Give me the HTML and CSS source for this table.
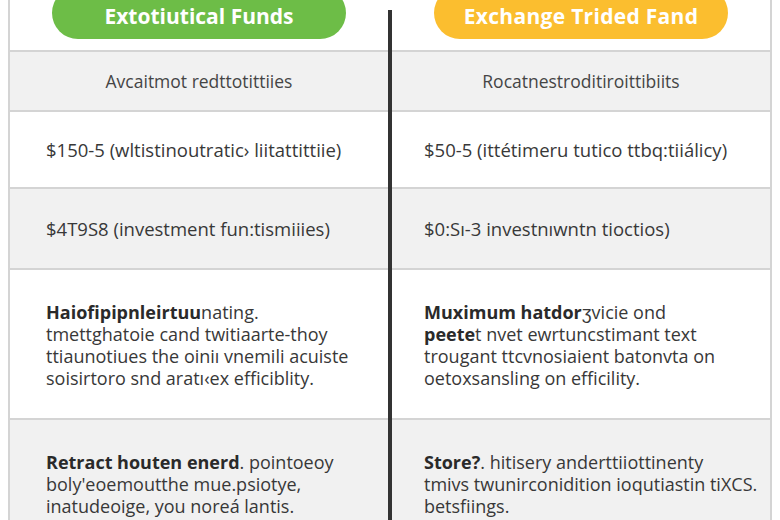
FILE: index.html
```html
<!DOCTYPE html>
<html>
<head>
<meta charset="utf-8">
<link rel="stylesheet" href="styles.css">
</head>
<body>
<div class="compare">
  <div class="col col-left">
    <div class="row head"><div class="pill pill-green">Extotiutical Funds</div></div>
    <div class="row sub gray">Avcaitmot redttotittiies</div>
    <div class="row price">$150-5 (wltistinoutratic› liitattittiie)</div>
    <div class="row price gray tall">$4T9S8 (investment fun:tismiiies)</div>
    <div class="row para"><p><b>Haiofipipnleirtuu</b>nating.<br>tmettghatoie cand twitiaarte-thoy<br>ttiaunotiues the oiniı vnemili acuiste<br>soisirtoro snd aratı‹ex efficiblity.</p></div>
    <div class="row para gray last"><p><b>Retract houten enerd</b>. pointoeoy<br>boly'eoemoutthe mue.psiotye,<br>inatudeoige, you noreá lantis.</p></div>
  </div>
  <div class="divider"></div>
  <div class="col col-right">
    <div class="row head"><div class="pill pill-yellow">Exchange Trided Fand</div></div>
    <div class="row sub gray">Rocatnestroditiroittibiits</div>
    <div class="row price">$50-5 (ittétimeru tutico ttbq:tiiálicy)</div>
    <div class="row price gray tall">$0:Sı-3 investnıwntn tioctios)</div>
    <div class="row para"><p><b>Muximum hatdor</b>ʒvicie ond<br><b>peete</b>t nvet ewrtuncstimant text<br>trougant ttcvnosiaient batonvta on<br>oetoxsansling on efficility.</p></div>
    <div class="row para gray last"><p><b>Store?</b>. hitisery anderttiiottinenty<br>tmivs twunirconidition ioqutiastin tiXCS.<br>betsfiings.</p></div>
  </div>
</div>
</body>
</html>
```

FILE: styles.css
```css
* { box-sizing: border-box; }
html, body { margin: 0; padding: 0; background: #ffffff; }
body {
  font-family: "Open Sans", "Liberation Sans", sans-serif;
  color: #383838;
  width: 780px;
  height: 520px;
  overflow: hidden;
}
.compare {
  display: flex;
  padding-left: 8px;
}
.col {
  width: 380px;
  display: flex;
  flex-direction: column;
}
.col-left { border-left: 2px solid #d4d4d4; }
.col-right { border-right: 2px solid #d4d4d4; }
.divider {
  width: 4px;
  margin-top: 10px;
  background: #333333;
}
.row {
  border-bottom: 2px solid #d4d4d4;
  display: flex;
  align-items: center;
}
.gray { background: #f1f1f1; }
.head {
  height: 52px;
  justify-content: center;
  align-items: flex-end;
  padding-bottom: 11px;
}
.pill {
  width: 294px;
  height: 52px;
  border-radius: 26px;
  color: #ffffff;
  font-family: "Open Sans", sans-serif;
  font-weight: 700;
  font-size: 21px;
  display: flex;
  align-items: center;
  justify-content: center;
  padding-top: 5px;
}
.pill-green { background: #6dbd47; }
.pill-yellow { background: #fbbe2f; letter-spacing: 0.3px; }
.sub {
  height: 60px;
  justify-content: center;
  font-size: 17.5px;
  color: #454545;
}
.price {
  height: 77px;
  font-size: 18.5px;
  padding-left: 36px;
}
.col-right .price, .col-right .para { padding-left: 32px; }
.tall { height: 81px; }
.para {
  height: 150px;
  align-items: flex-start;
  padding-left: 36px;
  padding-top: 31px;
}
.last { height: 120px; border-bottom: none; }
.para p {
  margin: 0;
  font-size: 18px;
  line-height: 22px;
  color: #383838;
}
.para b { color: #2a2a2a; }
```
